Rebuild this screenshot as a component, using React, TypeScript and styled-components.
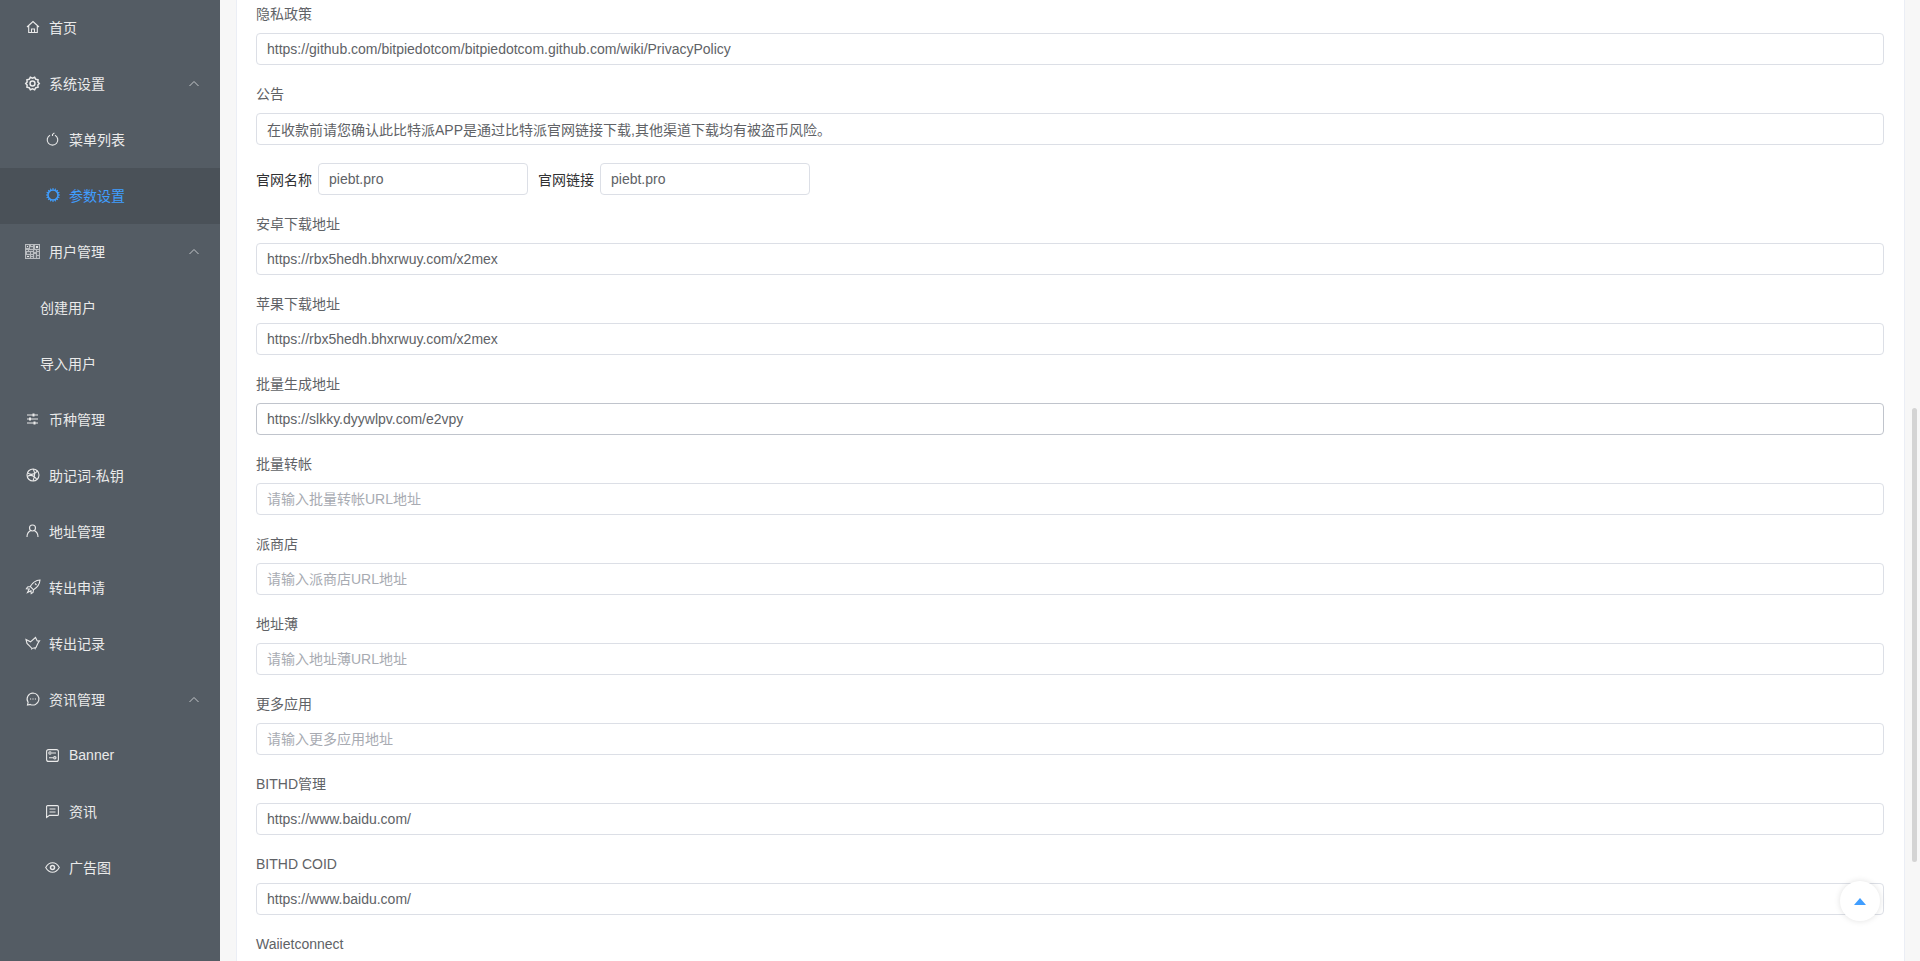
import React from "react";
import styled, { createGlobalStyle } from "styled-components";

const Global = createGlobalStyle`
  html, body { margin: 0; padding: 0; height: 100%; overflow: hidden; background: #f7f7f7; }
  #root { height: 100%; }
  * { box-sizing: border-box; }
  body { font-family: "Liberation Sans", "Noto Sans CJK SC", sans-serif; font-size: 14px; }
`;

const Layout = styled.div`
  display: flex;
  height: 961px;
  overflow: hidden;
`;
const Sidebar = styled.nav`
  flex: 0 0 220px;
  background: #545c64;
  color: #e8e8e8;
`;
const MenuRow = styled.div<{ $level: number; $active?: boolean }>`
  height: 56px;
  display: flex;
  align-items: center;
  position: relative;
  padding: 0 0 2px ${(p) => (p.$level === 1 ? 45 : p.$level === 2 ? 40 : 25)}px;
  background: ${(p) => (p.$active ? "#4a5158" : "transparent")};
  color: ${(p) => (p.$active ? "#409eff" : "#eaeaea")};
`;
const MenuIcon = styled.span`
  width: 15px;
  height: 16px;
  margin-right: 9px;
  display: flex;
  align-items: center;
  justify-content: center;
  svg { display: block; overflow: visible; }
`;
const Chevron = styled.svg`
  position: absolute;
  right: 20px;
  top: 24px;
`;
const Content = styled.main`
  flex: 1;
  margin-left: 16px;
  background: #fff;
  border-left: 1px solid #ebeef5;
  border-right: 1px solid #ebeef5;
  padding: 4px 20px 0 19px;
  overflow: hidden;
`;
const Field = styled.div`
  margin-bottom: 19px;
`;
const FieldLabel = styled.div`
  height: 20px;
  line-height: 20px;
  margin-bottom: 9px;
  color: #606266;
`;
const TextInput = styled.input<{ $hover?: boolean }>`
  display: block;
  width: 100%;
  height: 32px;
  padding: 0 10px;
  border: 1px solid ${(p) => (p.$hover ? "#c0c4cc" : "#dcdfe6")};
  border-radius: 4px;
  outline: none;
  background: #fff;
  color: #606266;
  font: inherit;
  &::placeholder { color: #a8abb2; opacity: 1; }
`;
const InlineRow = styled.div`
  display: flex;
  align-items: center;
  margin: -1px 0 19px;
`;
const InlineLabel = styled.label`
  color: #303133;
  margin-right: 6px;
  white-space: nowrap;
`;
const InlineInput = styled(TextInput)`
  width: 210px;
  margin-right: 10px;
`;
const Track = styled.div`
  flex: 0 0 15px;
  background: #f7f7f7;
  padding: 408px 3px 0 7px;
`;
const Thumb = styled.div`
  height: 454px;
  background: #d4d4d4;
  border-radius: 3px;
`;
const BackTop = styled.button`
  position: fixed;
  right: 40px;
  bottom: 40px;
  width: 40px;
  height: 40px;
  border: 0;
  padding: 0;
  border-radius: 50%;
  background: #fff;
  box-shadow: 0 0 6px rgba(0, 0, 0, 0.12);
  display: flex;
  align-items: center;
  justify-content: center;
`;

const S = { fill: "none", stroke: "currentColor", strokeWidth: 1.1 } as const;
const icons: Record<string, React.ReactNode> = {
  house: (
    <svg width="14" height="14" viewBox="0 0 14 14" {...S}>
      <path d="M1 7 7 1.5 13 7M2.7 6v6.5h8.6V6M5.5 12.5V9h3v3.5" />
    </svg>
  ),
  gear: (
    <svg width="15" height="15" viewBox="0 0 14 14" fill="none" stroke="currentColor" strokeWidth="1.4">
      <path d="M5 1.200 7 2l2-.8 1.100 1.900 2.100.4-.2 2.100L13.300 7 12 8.400l.2 2.100-2.100.4L9 12.800 7 12l-2 .8-1.100-1.900-2.100-.4.200-2.100L.7 7 2 5.600l-.2-2.100 2.100-.4z" />
      <circle cx="7" cy="7" r="2.300" />
    </svg>
  ),
  apple: (
    <svg width="13" height="14" viewBox="0 0 13 14" {...S}>
      <path d="M4 3.200A5.300 5.300 0 1 0 9 3.200M6.500 4V2.400L8.400.8" />
    </svg>
  ),
  cpu: (
    <svg width="14" height="14" viewBox="0 0 13 13" fill="none" stroke="currentColor" strokeWidth="1.500">
      <circle cx="6.500" cy="6.500" r="4.700" />
      <path d="M6.500 0v1.500M6.500 11.500V13M0 6.500h1.500M11.500 6.500H13M2 2l1 1M10 10l1 1M11 2l-1 1M3 10l-1 1M4 .5l.4 1.300M9 .5l-.4 1.300M4 12.500l.4-1.300M9 12.500l-.4-1.300M.5 4l1.300.4M.5 9l1.300-.4M12.500 4l-1.300.4M12.500 9l-1.300-.4" strokeWidth="1" />
    </svg>
  ),
  qr: (
    <svg width="15" height="15" viewBox="0 0 15 15">
      <rect width="15" height="15" fill="#b9bcc0" />
      <path fill="#6a7077" d="M1 1h3v3H1zM6 1h2v1H6zM10 1h4v4h-4zM5 3h3v2H5zM1 6h2v1H1zM4 6h4v1H4zM9 6h2v2H9zM12 6h2v1h-2zM2 8h3v2H2zM6 8h2v2H6zM12 8h2v3h-2zM1 11h4v3H1zM6 11h2v1H6zM9 10h2v4H9zM6 13h2v1H6zM12 12h2v2h-2z" />
      <path fill="#e6e7e8" d="M2 2h1v1H2zM11 2h2v2h-2zM2 12h2v1H2z" />
    </svg>
  ),
  sliders: (
    <svg width="13" height="12" viewBox="0 0 13 12" fill="none" stroke="currentColor" strokeWidth="1">
      <path d="M1 2h11M1 6h11M1 10h11" />
      <path d="M7.500 .6v2.800M4 4.600v2.800M8.500 8.600v2.800" strokeWidth="2" />
    </svg>
  ),
  ball: (
    <svg width="14" height="14" viewBox="0 0 14 14" {...S}>
      <circle cx="7" cy="7" r="6" />
      <path d="M7 1c2 3 2.500 5 0 12M1.600 5c3 1.800 7 1.600 9.800-1.800M1.300 8.500c3-2 6.500-1 9.700 3" />
    </svg>
  ),
  user: (
    <svg width="13" height="14" viewBox="0 0 13 14" {...S}>
      <circle cx="6.500" cy="4" r="3" />
      <path d="M1 13c0-3.500 2-5.500 3.500-6.200M12 13c0-3.500-2-5.500-3.500-6.200" />
    </svg>
  ),
  rocket: (
    <svg width="16" height="16" viewBox="0 0 16 16" {...S}>
      <path d="M15 1c-4 .3-7.300 2.300-9.800 6.500L8.500 10.800C12.700 8.300 14.700 5 15 1zM5.200 7.500 2.600 8l-1.200 1.800 2.600.2M8.500 10.800 8 13.400l-1.800 1.200-.2-2.600M4.500 9.500 2.500 13.500l4-2M10 4.500l1.500 1.500" />
    </svg>
  ),
  bird: (
    <svg width="15" height="14" viewBox="0 0 15 14" {...S}>
      <path d="M1 3.500 5.500 5.800 10.500 1.500 12.200 5 14.500 4.800 12.800 7.500 11 11.500 7 12.500 4.500 9.800 2 7.500zM7 12.500l-.6 1M10 12l.4 1.300" />
    </svg>
  ),
  chat: (
    <svg width="14" height="14" viewBox="0 0 14 14" {...S}>
      <path d="M7 1a6 6 0 1 1-2.700 11.400L1.500 13l.6-2.700A6 6 0 0 1 7 1z" />
      <path d="M4.300 7h.8M6.600 7h.8M8.900 7h.8" strokeWidth="1.300" />
    </svg>
  ),
  setup: (
    <svg width="13" height="13" viewBox="0 0 13 13" {...S}>
      <rect x=".6" y=".6" width="11.800" height="11.800" rx="2" />
      <circle cx="4" cy="4" r="1.200" />
      <circle cx="8.800" cy="8.800" r="1.200" />
      <path d="M6 4h4M3 8.800h4" />
    </svg>
  ),
  square: (
    <svg width="13" height="13" viewBox="0 0 13 13" {...S}>
      <path d="M.6 1.600a1 1 0 0 1 1-1h9.800a1 1 0 0 1 1 1v7.800a1 1 0 0 1-1 1H3.500L.6 12.400zM3.500 4h6M3.500 7h6" />
    </svg>
  ),
  eye: (
    <svg width="15" height="11" viewBox="0 0 15 11" {...S}>
      <path d="M.7 5.500C2.500 2.300 4.800.8 7.500.8s5 1.500 6.800 4.700C12.500 8.700 10.200 10.200 7.500 10.200S2.500 8.700.7 5.500z" />
      <circle cx="7.500" cy="5.500" r="2" strokeWidth="1.500" />
    </svg>
  ),
};

type Item = { text: string; level: number; icon?: string; open?: boolean; active?: boolean };
const menu: Item[] = [
  { text: "首页", level: 0, icon: "house" },
  { text: "系统设置", level: 0, icon: "gear", open: true },
  { text: "菜单列表", level: 1, icon: "apple" },
  { text: "参数设置", level: 1, icon: "cpu", active: true },
  { text: "用户管理", level: 0, icon: "qr", open: true },
  { text: "创建用户", level: 2 },
  { text: "导入用户", level: 2 },
  { text: "币种管理", level: 0, icon: "sliders" },
  { text: "助记词-私钥", level: 0, icon: "ball" },
  { text: "地址管理", level: 0, icon: "user" },
  { text: "转出申请", level: 0, icon: "rocket" },
  { text: "转出记录", level: 0, icon: "bird" },
  { text: "资讯管理", level: 0, icon: "chat", open: true },
  { text: "Banner", level: 1, icon: "setup" },
  { text: "资讯", level: 1, icon: "square" },
  { text: "广告图", level: 1, icon: "eye" },
];

type F = { label: string; value?: string; placeholder?: string; hover?: boolean };
const topFields: F[] = [
  { label: "隐私政策", value: "https://github.com/bitpiedotcom/bitpiedotcom.github.com/wiki/PrivacyPolicy" },
  { label: "公告", value: "在收款前请您确认此比特派APP是通过比特派官网链接下载,其他渠道下载均有被盗币风险。" },
];
const restFields: F[] = [
  { label: "安卓下载地址", value: "https://rbx5hedh.bhxrwuy.com/x2mex" },
  { label: "苹果下载地址", value: "https://rbx5hedh.bhxrwuy.com/x2mex" },
  { label: "批量生成地址", value: "https://slkky.dyywlpv.com/e2vpy", hover: true },
  { label: "批量转帐", placeholder: "请输入批量转帐URL地址" },
  { label: "派商店", placeholder: "请输入派商店URL地址" },
  { label: "地址薄", placeholder: "请输入地址薄URL地址" },
  { label: "更多应用", placeholder: "请输入更多应用地址" },
  { label: "BITHD管理", value: "https://www.baidu.com/" },
  { label: "BITHD COID", value: "https://www.baidu.com/" },
];

const FieldBlock = ({ f }: { f: F }) => (
  <Field>
    <FieldLabel>{f.label}</FieldLabel>
    <TextInput $hover={f.hover} defaultValue={f.value} placeholder={f.placeholder} />
  </Field>
);

export default function App() {
  return (
    <Layout>
      <Global />
      <Sidebar>
        {menu.map((m, i) => (
          <MenuRow key={i} $level={m.level} $active={m.active}>
            {m.icon && <MenuIcon>{icons[m.icon]}</MenuIcon>}
            {m.text}
            {m.open && (
              <Chevron width="12" height="7" viewBox="0 0 12 7" fill="none" stroke="#c4c7ca" strokeWidth="1">
                <path d="M1.500 6 6 1.500 10.500 6" />
              </Chevron>
            )}
          </MenuRow>
        ))}
      </Sidebar>
      <Content>
        {topFields.map((f) => (
          <FieldBlock key={f.label} f={f} />
        ))}
        <InlineRow>
          <InlineLabel>官网名称</InlineLabel>
          <InlineInput defaultValue="piebt.pro" />
          <InlineLabel>官网链接</InlineLabel>
          <InlineInput defaultValue="piebt.pro" />
        </InlineRow>
        {restFields.map((f) => (
          <FieldBlock key={f.label} f={f} />
        ))}
        <FieldLabel>Waiietconnect</FieldLabel>
      </Content>
      <Track>
        <Thumb />
      </Track>
      <BackTop aria-label="top">
        <svg width="12" height="7" viewBox="0 0 12 7">
          <path d="M6 0 12 7H0z" fill="#409eff" />
        </svg>
      </BackTop>
    </Layout>
  );
}
